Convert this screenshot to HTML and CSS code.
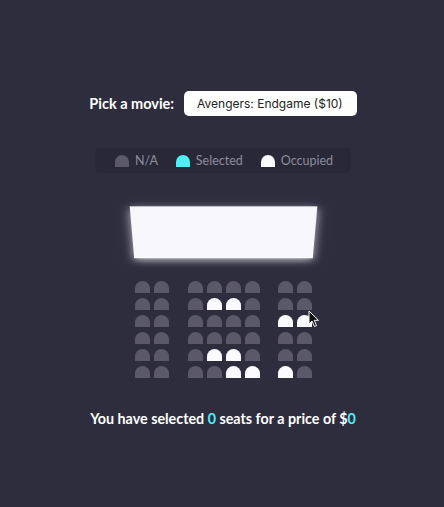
FILE: index.html
```html
<!DOCTYPE html>
<html lang="en">
<head>
<meta charset="UTF-8">
<title>Movie Seat Booking</title>
<link rel="stylesheet" href="styles.css">
</head>
<body>
  <div class="movie-container">
    <label class="movie-label">Pick a movie:</label>
    <div class="movie-select">Avengers: Endgame ($10)</div>
  </div>

  <ul class="showcase">
    <li class="legend-item"><div class="seat"></div><small class="legend-text">N/A</small></li>
    <li class="legend-item"><div class="seat selected"></div><small class="legend-text">Selected</small></li>
    <li class="legend-item"><div class="seat occupied"></div><small class="legend-text">Occupied</small></li>
  </ul>

  <div class="container">
    <div class="screen"></div>
    <div class="row"><div class="seat"></div><div class="seat"></div><div class="seat"></div><div class="seat"></div><div class="seat"></div><div class="seat"></div><div class="seat"></div><div class="seat"></div></div>
    <div class="row"><div class="seat"></div><div class="seat"></div><div class="seat"></div><div class="seat occupied"></div><div class="seat occupied"></div><div class="seat"></div><div class="seat"></div><div class="seat"></div></div>
    <div class="row"><div class="seat"></div><div class="seat"></div><div class="seat"></div><div class="seat"></div><div class="seat"></div><div class="seat"></div><div class="seat occupied"></div><div class="seat occupied"></div></div>
    <div class="row"><div class="seat"></div><div class="seat"></div><div class="seat"></div><div class="seat"></div><div class="seat"></div><div class="seat"></div><div class="seat"></div><div class="seat"></div></div>
    <div class="row"><div class="seat"></div><div class="seat"></div><div class="seat"></div><div class="seat occupied"></div><div class="seat occupied"></div><div class="seat"></div><div class="seat"></div><div class="seat"></div></div>
    <div class="row"><div class="seat"></div><div class="seat"></div><div class="seat"></div><div class="seat"></div><div class="seat occupied"></div><div class="seat occupied"></div><div class="seat occupied"></div><div class="seat"></div></div>
    <svg class="cursor" width="12" height="18" viewBox="0 0 12 18"><path d="M1 1 L1 14 L4 11 L6.5 16.5 L8.5 15.6 L6.2 10.3 L10.5 10.3 Z" fill="#111" stroke="#fff" stroke-width="1" stroke-linejoin="round"/></svg>
  </div>

  <p class="text">You have selected <span class="count">0</span> seats for a price of $<span class="count">0</span></p>
</body>
</html>
```

FILE: styles.css
```css
* { box-sizing: border-box; }

html, body { margin: 0; }

body {
  background-color: #2e2d3e;
  color: #fff;
  font-family: "Lato", "Noto Sans", sans-serif;
  display: flex;
  flex-direction: column;
  align-items: center;
  height: 507px;
  padding: 91px 0 0 2px;
  overflow: hidden;
}

.movie-container {
  display: flex;
  align-items: center;
  height: 25px;
}

.movie-label {
  font-size: 14.5px;
  font-weight: 700;
}

.movie-select {
  background-color: #fff;
  color: #222;
  border-radius: 5px;
  font-family: "Inter", "Noto Sans", sans-serif;
  font-size: 12px;
  line-height: 25px;
  height: 25px;
  margin-left: 10px;
  padding: 0 14px 0 13px;
}

.showcase {
  background: rgba(0, 0, 0, 0.1);
  list-style: none;
  display: flex;
  margin: 32px 0 0;
  padding: 0 10px;
  height: 25px;
  border-radius: 5px;
  color: #8e8c9c;
}

.legend-item {
  display: flex;
  align-items: center;
  margin: 0 8px;
}

.legend-text {
  font-size: 12.5px;
  margin-left: 3px;
}

.seat {
  background-color: #5a5869;
  width: 14px;
  height: 12px;
  margin: 2.5px 2.5px;
  border-top-left-radius: 10px;
  border-top-right-radius: 10px;
}

.seat.selected { background-color: #4deff8; }
.seat.occupied { background-color: #fafaff; }

.container {
  perspective: 1000px;
  margin-top: 10px;
  position: relative;
  display: flex;
  flex-direction: column;
  align-items: center;
}

.screen {
  background-color: #f8f7fc;
  height: 70px;
  width: 183px;
  margin: 15px 0 10.5px;
  transform: rotateX(-45deg);
  box-shadow: 0 3px 10px rgba(255, 255, 255, 0.7);
}

.row {
  display: flex;
}

.row .seat { margin: 2.5px 2px; width: 15px; }
.row .seat:nth-of-type(2) { margin-right: 17px; }
.row .seat:nth-last-of-type(2) { margin-left: 16px; }

.cursor {
  position: absolute;
  left: 176px;
  top: 127px;
}

.text {
  margin: 29px 0 0;
  font-size: 14.3px;
  font-weight: 700;
}

.count { color: #4deff8; }
```
